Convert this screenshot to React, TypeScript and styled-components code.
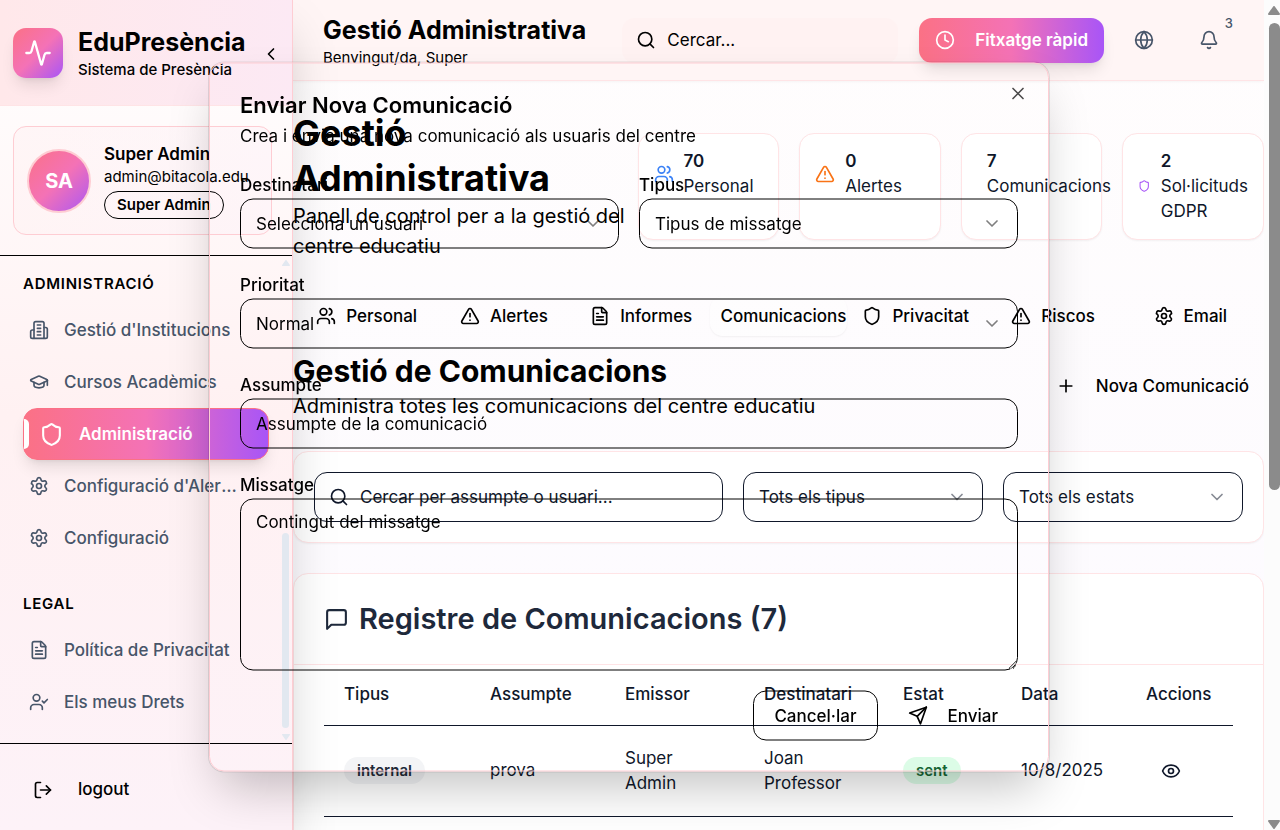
import React from 'react';
import styled, { createGlobalStyle, css } from 'styled-components';
import {
  Activity, Bell, ChevronDown, ChevronLeft, Clock, Eye, FileText, Globe, GraduationCap,
  LogOut, Plus, Search, Settings, Shield, TriangleAlert, UserCheck, Users, X,
} from 'lucide-react';

const color = {
  ink: '#000000',
  slate: '#0f172a',
  title: '#1e293b',
  muted: '#475569',
  line: '#fecdd3',
  soft: '#ffe4e6',
};
const brand = 'linear-gradient(90deg, #fb7185 0%, #f472b6 50%, #a855f7 100%)';
const brandDiagonal = 'linear-gradient(135deg, #fb7185 0%, #f472b6 50%, #a855f7 100%)';

const GlobalStyle = createGlobalStyle`
  *, *::before, *::after { box-sizing: border-box; }
  body {
    margin: 0;
    font-family: Inter, sans-serif;
    font-size: 20px;
    line-height: 30px;
    color: ${color.ink};
  }
  h1, h2, h3, p { margin: 0; }
  button, input, select, textarea { font: inherit; color: inherit; margin: 0; }
  svg { display: block; }
`;

const Shell = styled.div`
  display: flex;
  height: 100vh;
  overflow: hidden;
  background: linear-gradient(180deg, #fffdfd 0%, #fcfaff 100%);
`;

const body17 = css`
  font-size: 17px;
  line-height: 25px;
`;

/* Sidebar */
const Sidebar = styled.aside`
  position: relative;
  z-index: 2;
  display: flex;
  flex: 0 0 293px;
  flex-direction: column;
  border-right: 1px solid ${color.line};
  background: linear-gradient(180deg, #ffffff 0%, #fff1f2 50%, #fdf2f8 100%);
  box-shadow: 0 25px 50px -12px rgba(0, 0, 0, 0.25);
`;
const Brand = styled.div`
  display: flex;
  align-items: center;
  gap: 15px;
  height: 106px;
  padding: 0 13px;
  border-bottom: 1px solid ${color.soft};
  background: linear-gradient(90deg, #ffe8ea 0%, #fce9f4 100%);
`;
const Logo = styled.div`
  display: grid;
  place-items: center;
  flex: none;
  width: 50px;
  height: 50px;
  border-radius: 13px;
  color: #fff;
  background: ${brandDiagonal};
  box-shadow: 0 10px 15px -3px rgba(0, 0, 0, 0.1), 0 4px 6px -4px rgba(0, 0, 0, 0.1);
`;
const BrandText = styled.div`
  flex: 1;
`;
const BrandName = styled.p`
  font-size: 25px;
  font-weight: 700;
  line-height: 35px;
`;
const BrandSub = styled.p`
  font-size: 15px;
  font-weight: 500;
  line-height: 20px;
`;
const IconButton = styled.button<{ $size?: number }>`
  position: relative;
  display: grid;
  place-items: center;
  flex: none;
  width: ${({ $size = 45 }) => $size}px;
  height: ${({ $size = 45 }) => $size}px;
  padding: 0;
  border: 0;
  background: none;
`;
const ProfileArea = styled.div`
  padding: 20px 20px 20px 13px;
  border-bottom: 1px solid ${color.ink};
`;
const ProfileCard = styled.div`
  display: flex;
  align-items: center;
  gap: 13px;
  height: 109px;
  padding: 0 13px;
  border: 1px solid ${color.line};
  border-radius: 13px;
  background: linear-gradient(90deg, rgba(255, 241, 242, 0.5), rgba(253, 242, 248, 0.5));
`;
const Avatar = styled.div`
  display: grid;
  place-items: center;
  flex: none;
  width: 64px;
  height: 64px;
  border: 2px solid ${color.line};
  border-radius: 50%;
  font-weight: 700;
  color: #fff;
  background: ${brandDiagonal} border-box;
`;
const ProfileText = styled.div`
  min-width: 0;
  white-space: nowrap;
`;
const ProfileName = styled.p`
  ${body17}
  font-weight: 600;
`;
const ProfileMail = styled.p`
  font-size: 15px;
  line-height: 20px;
`;
const RoleBadge = styled.span`
  display: block;
  width: fit-content;
  margin-top: 4px;
  padding: 3px 12px;
  border: 1px solid ${color.ink};
  border-radius: 14px;
  font-size: 15px;
  font-weight: 600;
  line-height: 20px;
`;
const NavScroll = styled.nav`
  display: flex;
  flex: 1;
  min-height: 0;
  overflow: hidden;
`;
const NavBody = styled.div`
  flex: 1;
  min-width: 0;
  padding: 18px 10px 0 23px;
`;
const NavHeading = styled.h2`
  margin-bottom: 10px;
  font-size: 15px;
  font-weight: 600;
  line-height: 20px;
  letter-spacing: 0.05em;
`;
const NavList = styled.ul`
  display: flex;
  flex-direction: column;
  margin: 0 0 30px;
  padding: 0;
  list-style: none;
`;
const NavLink = styled.a<{ $active?: boolean }>`
  position: relative;
  display: flex;
  align-items: center;
  gap: 15px;
  height: 52px;
  padding: 0 6px;
  ${body17}
  font-weight: 500;
  color: ${color.muted};
  text-decoration: none;
  svg { flex: none; }
  span {
    overflow: hidden;
    max-width: 177px;
    text-overflow: ellipsis;
    white-space: nowrap;
  }
  ${({ $active }) => $active && css`
    padding: 0 15px;
    border: 1px solid #fb7185;
    border-radius: 14px;
    font-weight: 600;
    color: #fff;
    background: ${brand};
    box-shadow: 0 10px 15px -3px rgba(0, 0, 0, 0.1), 0 4px 6px -4px rgba(0, 0, 0, 0.1);
    &::before {
      content: '';
      position: absolute;
      top: 10px;
      left: 0;
      width: 5px;
      height: 30px;
      border-radius: 0 5px 5px 0;
      background: #fff;
    }
  `}
`;
const Track = styled.div<{ $wide?: boolean }>`
  display: flex;
  flex: 0 0 ${({ $wide }) => ($wide ? 16 : 13)}px;
  flex-direction: column;
  align-items: center;
  justify-content: space-between;
  padding: ${({ $wide }) => ($wide ? '6px 0 1px 4px' : '4px 0 3px')};
  color: ${({ $wide }) => ($wide ? '#8b8b8b' : '#e2e8f0')};
  background: ${({ $wide }) => ($wide ? '#fcfcfc' : 'none')};
`;
const Rail = styled.div<{ $end?: boolean }>`
  display: flex;
  flex: 1;
  flex-direction: column;
  justify-content: ${({ $end }) => ($end ? 'flex-end' : 'flex-start')};
  padding: 8px 0 6px;
`;
const Thumb = styled.div<{ $wide?: boolean }>`
  width: ${({ $wide }) => ($wide ? 11 : 7)}px;
  height: ${({ $wide }) => ($wide ? '59%' : '43%')};
  border-radius: 6px;
  background: currentColor;
`;
const SidebarFoot = styled.div`
  display: flex;
  align-items: center;
  height: 87px;
  padding: 5px 33px 0;
  border-top: 1px solid ${color.ink};
`;
const PlainButton = styled.button<{ $gap?: number }>`
  display: flex;
  align-items: center;
  gap: ${({ $gap = 20 }) => $gap}px;
  padding: 0;
  border: 0;
  background: none;
  ${body17}
  font-weight: 500;
  white-space: nowrap;
`;

/* Main column */
const Main = styled.main`
  display: flex;
  flex: 1;
  flex-direction: column;
  min-width: 0;
`;
const Topbar = styled.header`
  display: flex;
  align-items: center;
  flex: none;
  height: 81px;
  padding: 0 33px 0 30px;
  border-bottom: 1px solid ${color.soft};
  background: #fff5f5;
  box-shadow: 0 1px 3px rgba(0, 0, 0, 0.04);
`;
const TopTitle = styled.div`
  flex: none;
  h2 { font-size: 25px; font-weight: 700; line-height: 35px; }
  p { font-size: 15px; line-height: 20px; }
`;
const TopSearch = styled.label`
  display: flex;
  align-items: center;
  flex: 1;
  gap: 11px;
  min-width: 0;
  height: 45px;
  margin: 0 21px 0 36px;
  padding: 0 14px;
  border-radius: 13px;
  background: rgba(255, 240, 240, 0.5);
  input {
    flex: 1;
    min-width: 0;
    padding: 0;
    border: 0;
    outline: 0;
    background: none;
    ${body17}
  }
  input::placeholder { color: ${color.ink}; opacity: 1; }
`;
const ClockButton = styled.button`
  display: flex;
  align-items: center;
  flex: none;
  gap: 20px;
  height: 45px;
  padding: 0 16px;
  border: 0;
  border-radius: 13px;
  ${body17}
  font-weight: 600;
  color: #fff;
  background: ${brand};
  box-shadow: 0 10px 15px -3px rgba(0, 0, 0, 0.1), 0 4px 6px -4px rgba(0, 0, 0, 0.1);
`;
const TopActions = styled.div`
  display: flex;
  gap: 20px;
  margin-left: 17px;
  color: ${color.muted};
`;
const Count = styled.span`
  position: absolute;
  top: -5px;
  right: -2px;
  font-size: 13px;
  font-weight: 500;
  line-height: 20px;
`;
const Content = styled.div`
  display: flex;
  flex: 1;
  flex-direction: column;
  min-height: 0;
  padding-top: 30px;
  overflow: hidden;
  > * { flex: none; }
`;
const Intro = styled.div`
  display: grid;
  grid-template-columns: minmax(0, 11fr) minmax(0, 20fr);
  align-items: center;
`;
const PageTitle = styled.h1`
  font-size: 36px;
  font-weight: 700;
  line-height: 45px;
`;
const Stats = styled.div`
  display: grid;
  grid-template-columns: repeat(4, minmax(0, 1fr));
  gap: 20px;
`;
const cardLook = css`
  border: 1px solid ${color.soft};
  border-radius: 15px;
  color: ${color.slate};
  background: #fff;
  box-shadow: 0 1px 2px rgba(0, 0, 0, 0.05);
`;
const StatCard = styled.div`
  ${cardLook}
  padding: 15px;
  ${body17}
`;
const StatRow = styled.div`
  display: flex;
  align-items: center;
  gap: 10px;
  svg { flex: 0 1 20px; min-width: 0; }
  strong { display: block; font-weight: 600; }
`;
const TabList = styled.div`
  display: grid;
  grid-template-columns: repeat(7, minmax(0, 1fr));
  margin-top: 30px;
  padding: 5px;
`;
const Tab = styled.button<{ $active?: boolean }>`
  display: flex;
  align-items: center;
  justify-content: center;
  gap: 10px;
  min-width: 0;
  height: 40px;
  padding: 0 15px;
  border: 0;
  border-radius: 13px;
  background: none;
  ${body17}
  font-weight: 500;
  svg { flex: 0 1 20px; min-width: 0; }
  ${({ $active }) => $active && css`
    background: rgba(255, 255, 255, 0.3);
    box-shadow: 0 1px 2px rgba(0, 0, 0, 0.05);
  `}
`;
const SectionHead = styled.div`
  display: flex;
  align-items: center;
  justify-content: space-between;
  margin-top: 10px;
  padding-right: 15px;
  h2 { font-size: 30px; font-weight: 700; line-height: 40px; }
`;
const Filters = styled.div`
  ${cardLook}
  display: grid;
  grid-template-columns: minmax(0, 1fr) 240px 240px;
  gap: 20px;
  margin-top: 30px;
  padding: 20px;
`;
const fieldLook = css`
  width: 100%;
  height: 50px;
  padding: 0 15px;
  border: 1px solid currentColor;
  border-radius: 13px;
  outline: 0;
  background: transparent;
  ${body17}
`;
const SearchField = styled.label`
  ${fieldLook}
  display: flex;
  align-items: center;
  gap: 11px;
  padding: 0 14px;
  input {
    flex: 1;
    min-width: 0;
    padding: 0;
    border: 0;
    outline: 0;
    background: none;
  }
  input::placeholder { color: inherit; opacity: 1; }
`;
const SelectBox = styled.div`
  display: grid;
  align-items: center;
  > * { grid-area: 1 / 1; }
  svg { justify-self: end; margin-right: 16px; opacity: 0.5; pointer-events: none; }
`;
const SelectInput = styled.select`
  ${fieldLook}
  appearance: none;
`;
const TableCard = styled.section`
  ${cardLook}
  margin-top: 30px;
`;
const TableTitle = styled.h3`
  display: flex;
  align-items: center;
  gap: 10px;
  padding: 30px;
  border-bottom: 1px solid ${color.soft};
  font-size: 29px;
  font-weight: 600;
  line-height: 30px;
  color: ${color.title};
`;
const TableWrap = styled.div`
  padding: 0 30px 30px;
`;
const Table = styled.table`
  width: 100%;
  border-collapse: collapse;
  table-layout: fixed;
  ${body17}
  th, td { padding: 0 20px; text-align: left; border-bottom: 1px solid ${color.slate}; }
  th { height: 60px; font-weight: 500; }
  td { height: 91px; }
`;
const Pill = styled.span<{ $tone: 'gray' | 'green' }>`
  display: inline-block;
  padding: 3px 13px;
  border-radius: 14px;
  font-size: 15px;
  font-weight: 600;
  line-height: 21px;
  color: ${({ $tone }) => ($tone === 'green' ? '#166534' : '#1f2937')};
  background: ${({ $tone }) => ($tone === 'green' ? '#dcfce7' : '#f3f4f6')};
`;

/* Dialog */
const DialogLayer = styled.div`
  position: fixed;
  inset: 4px 22px 0 0;
  z-index: 10;
`;
const DialogBox = styled.div`
  position: absolute;
  top: 50%;
  left: 50%;
  display: grid;
  gap: 20px;
  width: 840px;
  max-width: 100%;
  padding: 30px;
  border: 1px solid ${color.line};
  border-radius: 15px;
  transform: translate(-50%, -50%);
  box-shadow: 0 25px 50px -12px rgba(0, 0, 0, 0.25), 0 0 0 1px rgba(0, 0, 0, 0.1);
`;
const DialogHead = styled.div`
  h2 { margin-bottom: 7px; font-size: 22px; font-weight: 600; line-height: 23px; }
  p { ${body17} }
`;
const CloseButton = styled.button`
  position: absolute;
  top: 20px;
  right: 20px;
  padding: 0;
  border: 0;
  background: none;
  opacity: 0.7;
`;
const FieldPair = styled.div`
  display: grid;
  grid-template-columns: 1fr 1fr;
  gap: 20px;
`;
const Field = styled.div`
  > label { font-size: 17px; font-weight: 500; line-height: 20px; }
`;
const TextInput = styled.input`
  ${fieldLook}
  display: block;
  &::placeholder { color: inherit; opacity: 1; }
`;
const TextArea = styled.textarea`
  ${fieldLook}
  display: block;
  height: 172px;
  padding: 10px 15px;
  resize: vertical;
  &::placeholder { color: inherit; opacity: 1; }
`;
const DialogFoot = styled.div`
  display: flex;
  justify-content: flex-end;
  gap: 10px;
`;
const DialogButton = styled.button<{ $outline?: boolean }>`
  display: flex;
  align-items: center;
  gap: 20px;
  height: 50px;
  padding: 0 20px;
  border: ${({ $outline }) => ($outline ? '1px solid #000' : '0')};
  border-radius: 13px;
  background: none;
  ${body17}
  font-weight: 500;
`;

const OutlineIcon = ({ size = 20, children }: { size?: number; children: React.ReactNode }) => (
  <svg width={size} height={size} viewBox="0 0 24 24" fill="none" stroke="currentColor" strokeWidth="2" strokeLinecap="round" strokeLinejoin="round" aria-hidden="true">
    {children}
  </svg>
);
const MessageIcon = ({ size = 20 }: { size?: number }) => (
  <OutlineIcon size={size}><path d="M21 15a2 2 0 0 1-2 2H7l-4 4V5a2 2 0 0 1 2-2h14a2 2 0 0 1 2 2z" /></OutlineIcon>
);
const SendIcon = () => (
  <OutlineIcon><path d="m22 2-7 20-4-9-9-4Z" /><path d="M22 2 11 13" /></OutlineIcon>
);
const BuildingIcon = ({ size = 20 }: { size?: number | string }) => (
  <OutlineIcon size={Number(size)}>
    <path d="M6 22V4a2 2 0 0 1 2-2h8a2 2 0 0 1 2 2v18Z" />
    <path d="M6 12H4a2 2 0 0 0-2 2v6a2 2 0 0 0 2 2h2" />
    <path d="M18 9h2a2 2 0 0 1 2 2v9a2 2 0 0 1-2 2h-2" />
    <path d="M10 6h4M10 10h4M10 14h4M10 18h4" />
  </OutlineIcon>
);
const Arrow = ({ down, width, height }: { down?: boolean; width: number; height: number }) => (
  <svg width={width} height={height} viewBox="0 0 12 9" preserveAspectRatio="none" fill="currentColor" stroke="currentColor" strokeLinejoin="round" strokeWidth="2" aria-hidden="true">
    <path d={down ? 'M1 1h10L6 8z' : 'M1 8h10L6 1z'} />
  </svg>
);

const Select = ({ id, label, value }: { id: string; label?: string; value: string }) => (
  <SelectBox>
    <SelectInput id={id} aria-label={label} defaultValue={value}><option>{value}</option></SelectInput>
    <ChevronDown size={20} />
  </SelectBox>
);

type NavItem = { icon: React.ComponentType<{ size?: number | string }>; text: string; active?: boolean };

const adminLinks: NavItem[] = [
  { icon: BuildingIcon, text: "Gestió d'Institucions" },
  { icon: GraduationCap, text: 'Cursos Acadèmics' },
  { icon: Shield, text: 'Administració', active: true },
  { icon: Settings, text: "Configuració d'Alertes" },
  { icon: Settings, text: 'Configuració' },
];
const legalLinks: NavItem[] = [
  { icon: FileText, text: 'Política de Privacitat' },
  { icon: UserCheck, text: 'Els meus Drets' },
];
const stats = [
  { icon: <Users size={20} color="#3b82f6" />, value: 70, text: 'Personal' },
  { icon: <TriangleAlert size={20} color="#f97316" />, value: 0, text: 'Alertes' },
  { icon: <MessageIcon />, value: 7, text: 'Comunicacions' },
  { icon: <Shield size={20} color="#a855f7" />, value: 2, text: 'Sol·licituds GDPR' },
];
const tabs = [
  { icon: <Users size={20} />, text: 'Personal' },
  { icon: <TriangleAlert size={20} />, text: 'Alertes' },
  { icon: <FileText size={20} />, text: 'Informes' },
  { icon: <MessageIcon />, text: 'Comunicacions', active: true },
  { icon: <Shield size={20} />, text: 'Privacitat' },
  { icon: <TriangleAlert size={20} />, text: 'Riscos' },
  { icon: <Settings size={20} />, text: 'Email' },
];
const columns = [
  ['Tipus', 146], ['Assumpte', 135], ['Emissor', 139], ['Destinatari', 139], ['Estat', 118], ['Data', 125], ['Accions', 107],
] as const;

const NavGroup = ({ title, links }: { title: string; links: NavItem[] }) => (
  <>
    <NavHeading>{title}</NavHeading>
    <NavList>
      {links.map(({ icon: Icon, text, active }) => (
        <li key={text}>
          <NavLink href="#" $active={active} aria-current={active ? 'page' : undefined}>
            <Icon size={active ? 25 : 20} /><span>{text}</span>
          </NavLink>
        </li>
      ))}
    </NavList>
  </>
);

export default function App() {
  return (
    <>
      <GlobalStyle />
      <Shell>
        <Sidebar>
          <Brand>
            <Logo><Activity size={28} /></Logo>
            <BrandText>
              <BrandName>EduPresència</BrandName>
              <BrandSub>Sistema de Presència</BrandSub>
            </BrandText>
            <IconButton $size={18} aria-label="Replega el menú"><ChevronLeft size={20} /></IconButton>
          </Brand>
          <ProfileArea>
            <ProfileCard>
              <Avatar>SA</Avatar>
              <ProfileText>
                <ProfileName>Super Admin</ProfileName>
                <ProfileMail>admin@bitacola.edu</ProfileMail>
                <RoleBadge>Super Admin</RoleBadge>
              </ProfileText>
            </ProfileCard>
          </ProfileArea>
          <NavScroll>
            <NavBody>
              <NavGroup title="ADMINISTRACIÓ" links={adminLinks} />
              <NavGroup title="LEGAL" links={legalLinks} />
            </NavBody>
            <Track aria-hidden="true">
              <Arrow width={8} height={6} />
              <Rail $end><Thumb /></Rail>
              <Arrow down width={8} height={6} />
            </Track>
          </NavScroll>
          <SidebarFoot>
            <PlainButton $gap={25}><LogOut size={20} />logout</PlainButton>
          </SidebarFoot>
        </Sidebar>

        <Main>
          <Topbar>
            <TopTitle>
              <h2>Gestió Administrativa</h2>
              <p>Benvingut/da, Super</p>
            </TopTitle>
            <TopSearch>
              <Search size={20} />
              <input type="text" placeholder="Cercar..." aria-label="Cercar" />
            </TopSearch>
            <ClockButton><Clock size={20} />Fitxatge ràpid</ClockButton>
            <TopActions>
              <IconButton aria-label="Idioma"><Globe size={20} /></IconButton>
              <IconButton aria-label="Notificacions"><Bell size={20} /><Count>3</Count></IconButton>
            </TopActions>
          </Topbar>
          <Content>
            <Intro>
              <div>
                <PageTitle>Gestió Administrativa</PageTitle>
                <p>Panell de control per a la gestió del centre educatiu</p>
              </div>
              <Stats>
                {stats.map((s) => (
                  <StatCard key={s.text}>
                    <StatRow>{s.icon}<div><strong>{s.value}</strong>{s.text}</div></StatRow>
                  </StatCard>
                ))}
              </Stats>
            </Intro>
            <TabList role="tablist">
              {tabs.map((t) => (
                <Tab key={t.text} role="tab" aria-selected={!!t.active} $active={t.active}>{t.icon}{t.text}</Tab>
              ))}
            </TabList>
            <SectionHead>
              <div>
                <h2>Gestió de Comunicacions</h2>
                <p>Administra totes les comunicacions del centre educatiu</p>
              </div>
              <PlainButton><Plus size={20} />Nova Comunicació</PlainButton>
            </SectionHead>
            <Filters>
              <SearchField>
                <Search size={20} />
                <input type="text" placeholder="Cercar per assumpte o usuari..." aria-label="Cercar comunicacions" />
              </SearchField>
              <Select id="filter-type" label="Tipus" value="Tots els tipus" />
              <Select id="filter-state" label="Estat" value="Tots els estats" />
            </Filters>
            <TableCard>
              <TableTitle><MessageIcon size={25} />Registre de Comunicacions (7)</TableTitle>
              <TableWrap>
                <Table>
                  <colgroup>
                    {columns.map(([name, share]) => <col key={name} style={{ width: `${(share / 909) * 100}%` }} />)}
                  </colgroup>
                  <thead>
                    <tr>{columns.map(([name]) => <th key={name} scope="col">{name}</th>)}</tr>
                  </thead>
                  <tbody>
                    <tr>
                      <td><Pill $tone="gray">internal</Pill></td>
                      <td>prova</td>
                      <td>Super Admin</td>
                      <td>Joan Professor</td>
                      <td><Pill $tone="green">sent</Pill></td>
                      <td>10/8/2025</td>
                      <td><IconButton $size={50} aria-label="Veure"><Eye size={20} /></IconButton></td>
                    </tr>
                  </tbody>
                </Table>
              </TableWrap>
            </TableCard>
          </Content>
        </Main>
        <Track $wide aria-hidden="true">
          <Arrow width={12} height={9} />
          <Rail><Thumb $wide /></Rail>
          <Arrow down width={12} height={9} />
        </Track>
      </Shell>

      <DialogLayer>
        <DialogBox role="dialog" aria-labelledby="dialog-title">
          <DialogHead>
            <h2 id="dialog-title">Enviar Nova Comunicació</h2>
            <p>Crea i envia una nova comunicació als usuaris del centre</p>
          </DialogHead>
          <FieldPair>
            <Field><label htmlFor="to">Destinatari</label><Select id="to" value="Selecciona un usuari" /></Field>
            <Field><label htmlFor="kind">Tipus</label><Select id="kind" value="Tipus de missatge" /></Field>
          </FieldPair>
          <Field><label htmlFor="priority">Prioritat</label><Select id="priority" value="Normal" /></Field>
          <Field><label htmlFor="subject">Assumpte</label><TextInput id="subject" placeholder="Assumpte de la comunicació" /></Field>
          <Field><label htmlFor="message">Missatge</label><TextArea id="message" placeholder="Contingut del missatge" /></Field>
          <DialogFoot>
            <DialogButton $outline>Cancel·lar</DialogButton>
            <DialogButton><SendIcon />Enviar</DialogButton>
          </DialogFoot>
          <CloseButton aria-label="Tanca"><X size={20} /></CloseButton>
        </DialogBox>
      </DialogLayer>
    </>
  );
}
